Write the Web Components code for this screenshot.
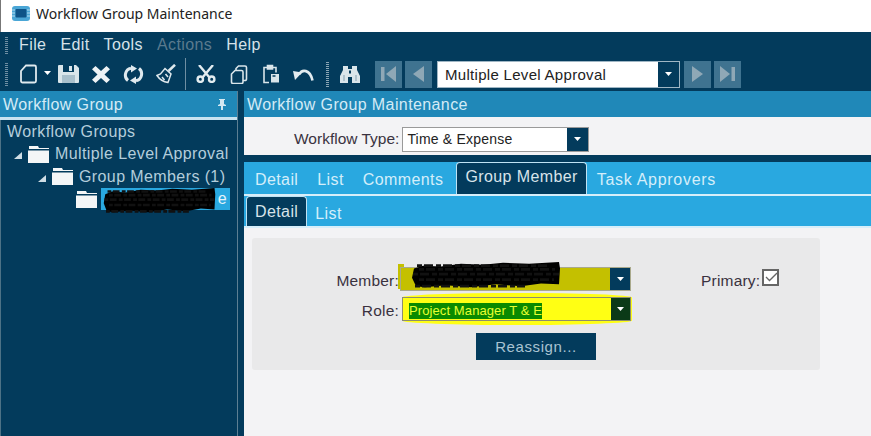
<!DOCTYPE html>
<html><head><meta charset="utf-8"><style>
html,body{margin:0;padding:0;height:436px;overflow:hidden;background:#033b5c;font-family:"Liberation Sans",Arial,sans-serif}
</style></head><body>
<wf-app></wf-app>
<script>
function def(name, html){
  customElements.define(name, class extends HTMLElement{
    constructor(){super();const r=this.attachShadow({mode:'open'});if(typeof html!=='function')r.innerHTML=html;}
    connectedCallback(){ if(typeof html==='function'){this.shadowRoot.innerHTML=html(this);} }
  });
}
const arrow=(c='#fff')=>`<svg width="7" height="4" viewBox="0 0 7 4"><path d="M0 0h7L3.500 4z" fill="${c}"/></svg>`;
const ICONS={
 new:`<svg width="18" height="20" viewBox="0 0 18 20" fill="none" stroke="#dfe9ee" stroke-width="1.800"><path d="M7 1.500h8.500a1.500 1.500 0 0 1 1.500 1.500v14a1.500 1.500 0 0 1-1.500 1.500h-12A1.500 1.500 0 0 1 2 17V7z"/></svg>`,
 save:`<svg width="21" height="18" viewBox="0 0 21 18"><path d="M0 1a1 1 0 0 1 1-1h17l3 3v14a1 1 0 0 1-1 1H1a1 1 0 0 1-1-1z" fill="#d9e5ea"/><path d="M5 0h11v7H5z" fill="#033b5c"/><path d="M11 1h3v5h-3z" fill="#d9e5ea"/><path d="M4 10h13v8H4z" fill="#a9c0cc"/></svg>`,
 x:`<svg width="18" height="17" viewBox="0 0 18 17"><path d="M3.500 0L9 5 14.500 0 18 3.300 12.500 8.500 18 13.700 14.500 17 9 12 3.500 17 0 13.700 5.500 8.500 0 3.300z" fill="#eef3f5"/></svg>`,
 refresh:`<svg width="21" height="19" viewBox="0 0 21 19" fill="none" stroke="#dfe9ee" stroke-width="3"><path d="M5 15.500A7 7 0 0 1 8 3.200"/><path d="M16 3.500a7 7 0 0 1-3 12.300"/><path d="M8 0l6 3.500-6 4zM13 11.500v7.500l-6-3.500z" fill="#dfe9ee" stroke="none"/></svg>`,
 broom:`<svg width="20" height="20" viewBox="0 0 20 20" fill="none" stroke="#dfe9ee" stroke-width="1.500"><path d="M12.500 7L19 .8" stroke-width="2.500"/><path d="M9 4.500l6 5.500-3 8.500C8 18 4 16 1 11.500l3.500-1.500z"/><path d="M6 13l2.500 3M9.500 10l2.500 3" /></svg>`,
 cut:`<svg width="20" height="18" viewBox="0 0 20 18" fill="none" stroke="#e3ecf0" stroke-width="2.400"><path d="M3 0l10.500 12.500M17 0L6.500 12.500"/><circle cx="4.300" cy="14.200" r="2.700"/><circle cx="15.700" cy="14.200" r="2.700"/></svg>`,
 copy:`<svg width="18" height="19" viewBox="0 0 18 19" fill="none" stroke="#d9e5ea" stroke-width="1.600"><path d="M6 5V3.500L8.500 1H15a1.500 1.500 0 0 1 1.500 1.500V14A1.500 1.500 0 0 1 15 15.500h-2"/><path d="M5 5.500h6.500A1.500 1.500 0 0 1 13 7v10a1.500 1.500 0 0 1-1.500 1.500H3A1.500 1.500 0 0 1 1.500 17V9z"/></svg>`,
 paste:`<svg width="17" height="20" viewBox="0 0 17 20" fill="none" stroke="#d9e5ea" stroke-width="1.600"><path d="M6 18.500H1V3.500h12v5"/><path d="M4.500 1.500h5v3.500h-5z" fill="#d9e5ea"/><path d="M8 10h8v8.500H8z" fill="#d9e5ea" stroke="none"/><path d="M9.500 12h3" stroke="#033b5c" stroke-width="1.500"/></svg>`,
 undo:`<svg width="21" height="13" viewBox="0 0 21 13" fill="none" stroke="#e3ecf0" stroke-width="2.600"><path d="M6 6.500C9 1 17 1 19.500 12.500"/><path d="M0 3l9 1.500L2 12z" fill="#e3ecf0" stroke="none"/></svg>`,
 find:`<svg width="20" height="18" viewBox="0 0 20 18"><path d="M3 1h5v3h4V1h5v4l3 6v7h-8v-6H8v6H0v-7l3-6z" fill="#d9e5ea"/><path d="M4 10v6M16 10v6" stroke="#9fb6c4" stroke-width="1.500"/><path d="M9 5.500h2v3H9z" fill="#033b5c"/></svg>`,
 folder:`<svg width="21" height="17" viewBox="0 0 21 17"><path d="M1 0h9l1 2h10v1H1z" fill="#f4f6f7"/><path d="M0 4.500h21V17H0z" fill="#f4f6f7"/></svg>`,
 pin:`<svg width="10" height="11" viewBox="0 0 10 11"><path d="M2 0h6v1H7v4l2 1v1H6v4H4V7H1V6l2-1V1H2z" fill="#d3e8f2"/></svg>`,
 first:`<svg width="15" height="16" viewBox="0 0 15 16"><path d="M0 1h3.500v14H0zM15 0v16L5 8z" fill="#8fa8b6"/></svg>`,
 prev:`<svg width="11" height="16" viewBox="0 0 11 16"><path d="M11 0v16L0 8z" fill="#8fa8b6"/></svg>`,
 next:`<svg width="11" height="16" viewBox="0 0 11 16"><path d="M0 0v16L11 8z" fill="#8fa8b6"/></svg>`,
 last:`<svg width="15" height="16" viewBox="0 0 15 16"><path d="M15 1h-3.500v14H15zM0 0v16L10 8z" fill="#8fa8b6"/></svg>`,
 logo:`<svg width="18" height="15" viewBox="0 0 18 15"><rect width="18" height="15" rx="3" fill="#4aa6d6"/><rect x="3.500" y="3" width="11" height="8.500" rx="1" fill="#0e5488"/><path d="M0 4h3M0 7h3M0 10h3M15 4h3M15 7h3M15 10h3" stroke="#b4def2"/></svg>`
};
def('wf-icon',el=>`<style>:host{display:inline-flex;align-items:center;justify-content:center;flex:none}svg{display:block}</style>${ICONS[el.getAttribute('name')]||''}`);

def('wf-titlebar',`<style>:host{display:flex;align-items:center;height:32px;background:#fff;padding:0 0 6px 11px;gap:6px;font:14px "Noto Sans","Liberation Sans",sans-serif;color:#222;box-sizing:border-box;border-left:1px solid #777}</style><wf-icon name="logo"></wf-icon><span>Workflow Group Maintenance</span>`);

def('wf-grip',`<style>:host{display:block;width:3px;height:17px;flex:none;background:repeating-linear-gradient(#6f8fa3 0 1px,transparent 1px 2px)}</style>`);

def('wf-menubar',`<style>:host{display:flex;align-items:center;height:26px;padding-left:5px;gap:11px;font-size:16px;color:#d6e2e9;background:#033b5c;letter-spacing:.4px}.d{color:#5a7a8e}.row{display:flex;gap:14px}</style><wf-grip></wf-grip><div class="row"><span>File</span><span>Edit</span><span>Tools</span><span class="d">Actions</span><span>Help</span></div>`);

def('wf-nav',el=>`<style>:host{display:flex;align-items:center;justify-content:center;width:27px;height:27px;flex:none;background:#3f7390}</style><wf-icon name="${el.getAttribute('name')}"></wf-icon>`);

def('wf-toolbar',`<style>:host{display:flex;align-items:center;height:32px;padding-left:5px;background:#033b5c;box-sizing:border-box}
wf-grip{height:23px}
.sep{width:1px;height:32px;background:#6f8fa3;flex:none}
.dots{width:3px;height:25px;flex:none;background:repeating-linear-gradient(#8aa6b6 0 1px,transparent 1px 2px)}
.caret{display:flex;flex:none}
</style>
<wf-grip></wf-grip>
<wf-icon name="new" style="margin-left:11px"></wf-icon><span class="caret" style="margin:0 0 2px 7px">${arrow('#fff')}</span>
<wf-icon name="save" style="margin-left:7px"></wf-icon><wf-icon name="x" style="margin-left:13px"></wf-icon><wf-icon name="refresh" style="margin-left:13px"></wf-icon><wf-icon name="broom" style="margin-left:12px"></wf-icon>
<span class="sep" style="margin-left:9px"></span>
<wf-icon name="cut" style="margin-left:10px"></wf-icon><wf-icon name="copy" style="margin-left:14px"></wf-icon><wf-icon name="paste" style="margin-left:15px"></wf-icon><wf-icon name="undo" style="margin-left:13px"></wf-icon>
<span class="dots" style="margin-left:12px"></span>
<wf-icon name="find" style="margin-left:11px"></wf-icon>
<wf-nav name="first" style="margin-left:15px"></wf-nav><wf-nav name="prev" style="margin-left:3px"></wf-nav>
<wf-combo style="margin-left:5px;width:243px;height:27px;--fs:15px;--ls:.3px;--pl:7px;--btn:21px;--bc:#9fb6c4">Multiple Level Approval</wf-combo>
<wf-nav name="next" style="margin-left:4px"></wf-nav><wf-nav name="last" style="margin-left:3px"></wf-nav>`);

def('wf-combo',`<style>:host{display:inline-flex;box-sizing:border-box;flex:none;border:1px solid var(--bc,#9a9a9a);background:var(--bg,#fff);height:24px;color:var(--fg,#222);font-size:var(--fs,14px);letter-spacing:var(--ls,.2px);align-items:stretch;position:relative}
.t{flex:1;display:flex;align-items:center;padding-left:var(--pl,4px);overflow:hidden;white-space:nowrap;background:var(--bg,#fff)}
.b{width:var(--btn,20px);background:var(--btnbg,#033b5c);display:flex;align-items:center;justify-content:center}
</style><div class="t"><slot></slot></div><div class="b">${arrow()}</div>`);

def('wf-panelhead',el=>`<style>:host{display:flex;align-items:center;justify-content:space-between;height:26px;background:#2088b8;color:#d3ebf6;font-size:16px;padding:1px 10px 0 3px;box-sizing:border-box;letter-spacing:.4px}</style><span><slot></slot></span>${el.hasAttribute('pin')?'<wf-icon name="pin"></wf-icon>':''}`);

def('wf-tree-node',el=>{const lv=+el.getAttribute('level')||0;const exp=el.hasAttribute('open');return `<style>:host{display:flex;align-items:center;height:22.500px;padding-left:${lv*24+13}px;color:#b3cddb;font-size:16px;gap:6px;letter-spacing:.4px}
.tw{width:0;height:0;border-style:solid;border-width:0 0 7px 8px;border-color:transparent transparent #cfdde5 transparent;visibility:${exp?'visible':'hidden'};margin-top:3px}
.l{display:block;white-space:nowrap}</style><span class="tw"></span><wf-icon name="folder"></wf-icon><span class="l"><slot></slot></span>`});

def('wf-scribble',`<style>:host{position:absolute;display:block;pointer-events:none}svg{display:block;width:100%;height:100%}</style><svg viewBox="0 0 150 30" preserveAspectRatio="none"><path d="M3 8L12 5L30 6L50 3L72 4L92 2L118 3L148 1L149 8L148 25L130 24L110 27L85 25L60 28L35 26L14 28L5 27L1 18Z" fill="#000"/><path d="M6 5h130M4 27h110M2 14h146M8 20h135M8 9h136" stroke="#111" stroke-width="3" stroke-dasharray="5 2 9 3" fill="none"/></svg>`);

def('wf-tree',`<style>:host{display:block;background:#033b5c;height:100%;box-sizing:border-box;position:relative;padding-top:1px}
.h{height:22px;display:flex;align-items:center;padding-left:6px;color:#b3cddb;font-size:16px;letter-spacing:.4px}
.sel{background:#29a8e0;color:#e6f4fb;width:129px;height:22px;display:flex;align-items:center;justify-content:flex-end;padding-right:3px;box-sizing:border-box;margin-left:-2px}
wf-scribble{left:102px;top:67px;width:113px;height:27px}
</style>
<div class="h">Workflow Groups</div>
<wf-tree-node level="0" open>Multiple Level Approval</wf-tree-node>
<wf-tree-node level="1" open>Group Members (1)</wf-tree-node>
<wf-tree-node level="2"><span class="sel">e</span></wf-tree-node>
<wf-scribble></wf-scribble>`);

def('wf-tab',el=>{const a=el.hasAttribute('active');const low=el.hasAttribute('low');
 const pad=a?(low?'1px 8px 0 8px':'0 8px 3px 8px'):(low?'5px 9px 0':'3px 9px 0');
 return `<style>:host{display:flex;align-items:center;padding:${pad};font-size:16px;height:100%;box-sizing:border-box;color:${a?'#d8e4ea':'#d4eefa'};letter-spacing:.4px;white-space:nowrap;${a?'background:#033b5c;border:1px solid #bfe3f4;border-bottom:0;border-radius:4px 4px 0 0;':''}}</style><slot></slot>`});

def('wf-tabstrip',`<style>:host{display:flex;align-items:flex-end;background:#29a8e0;padding:0 0 0 2px;gap:1px;box-sizing:border-box;height:var(--h,33px);border-bottom:2px solid #d6eefa}</style><slot></slot>`);

def('wf-form',`<style>:host{display:block;position:relative;width:568px;height:132px;background:#e9e9ea;border-radius:3px;margin:0 0 0 8px;color:#3a3240;font-size:15.500px;letter-spacing:.2px}
.grid{display:grid;grid-template-columns:148px 231px 70px auto;grid-template-rows:30px 30px;padding-top:26px;box-sizing:border-box;align-items:center}
.lab{justify-self:end;padding:4px 1px 0 0;position:relative;z-index:1}
.pri{display:flex;align-items:center;padding-top:4px}
.cb{box-sizing:border-box;width:17px;height:17px;border:2px solid #666;background:#fff;display:flex;margin:-7px 0 0 2px;flex:none}
wf-combo{height:24px;width:100%}
.member{--bg:#c4c000;--bc:#a9a98c;--btnbg:#033b5c}
.role{--bg:#ffff14;--bc:#8d8d70;--btnbg:#0b3a17;--btn:19px;position:relative;z-index:1;width:229px;margin-left:2px;--pl:6px}
.hl{background:#0a8a00;color:#e8ff30;font-size:13px;letter-spacing:.1px;line-height:16px;margin-top:3px}
.btn{margin:9px 0 0 224px;width:120px;height:27px;background:#033b5c;color:#a9c3d2;display:flex;align-items:center;justify-content:center;font-size:15px;letter-spacing:.6px}
wf-scribble{left:159px;top:23px;width:150px;height:28px}
.glow{position:absolute;left:150px;top:55px;width:230px;height:32px;background:#ffff14;border-radius:50%/14%}
.mhl{position:absolute;left:146px;top:26px;width:6px;height:25px;background:#c4c000}
</style>
<span class="glow"></span><span class="mhl"></span>
<div class="grid">
 <span class="lab">Member:</span><wf-combo class="member"></wf-combo><span></span>
 <span class="pri"><span>Primary:</span><span class="cb"><svg width="13" height="13" viewBox="0 0 13 13" fill="none" stroke="#666" stroke-width="1.300"><path d="M2 6l3.500 3.500L13 2"/></svg></span></span>
 <span class="lab">Role:</span><wf-combo class="role"><span class="hl">Project Manager T &amp; E</span></wf-combo><span></span><span></span>
</div>
<div class="btn">Reassign...</div>
<wf-scribble></wf-scribble>`);

def('wf-app',`<style>:host{display:block;height:436px;overflow:hidden;background:#033b5c}
.main{display:flex;height:346px;gap:6px;padding-top:1px;box-sizing:border-box}
.left{width:238px;flex:none;display:flex;flex-direction:column;border-right:1px solid #5d7f93;box-sizing:border-box}
.left wf-panelhead{border-bottom:3px solid #c9e4f1;height:29px;flex:none}
.left wf-tree{flex:1;border-left:1px solid #4d7286}
.right{flex:1;display:flex;flex-direction:column;min-width:0;background:#f3f3f5}
.type{height:38px;flex:none;box-sizing:border-box;padding:6px 0 0 50px;background:#f3f3f5;display:flex;align-items:center;gap:3px;font-size:15.500px;color:#3a3240}
.type wf-combo{width:187px;height:25px;--btn:21px}
.div{height:7px;flex:none;background:#033b5c}
.sp{height:10px;flex:none}
</style>
<wf-titlebar></wf-titlebar><wf-menubar></wf-menubar><wf-toolbar></wf-toolbar>
<div class="main">
 <div class="left"><wf-panelhead pin>Workflow Group</wf-panelhead><wf-tree></wf-tree></div>
 <div class="right">
  <wf-panelhead>Workflow Group Maintenance</wf-panelhead>
  <div class="type"><span>Workflow Type:</span><wf-combo>Time &amp; Expense</wf-combo></div>
  <div class="div"></div>
  <wf-tabstrip style="--h:34px"><wf-tab>Detail</wf-tab><wf-tab>List</wf-tab><wf-tab>Comments</wf-tab><wf-tab active style="margin-left:3px">Group Member</wf-tab><wf-tab style="letter-spacing:.7px">Task Approvers</wf-tab></wf-tabstrip>
  <wf-tabstrip style="--h:32px"><wf-tab active low>Detail</wf-tab><wf-tab low style="margin-left:-2px">List</wf-tab></wf-tabstrip>
  <div class="sp"></div>
  <wf-form></wf-form>
 </div>
</div>`);
</script>
</body></html>
